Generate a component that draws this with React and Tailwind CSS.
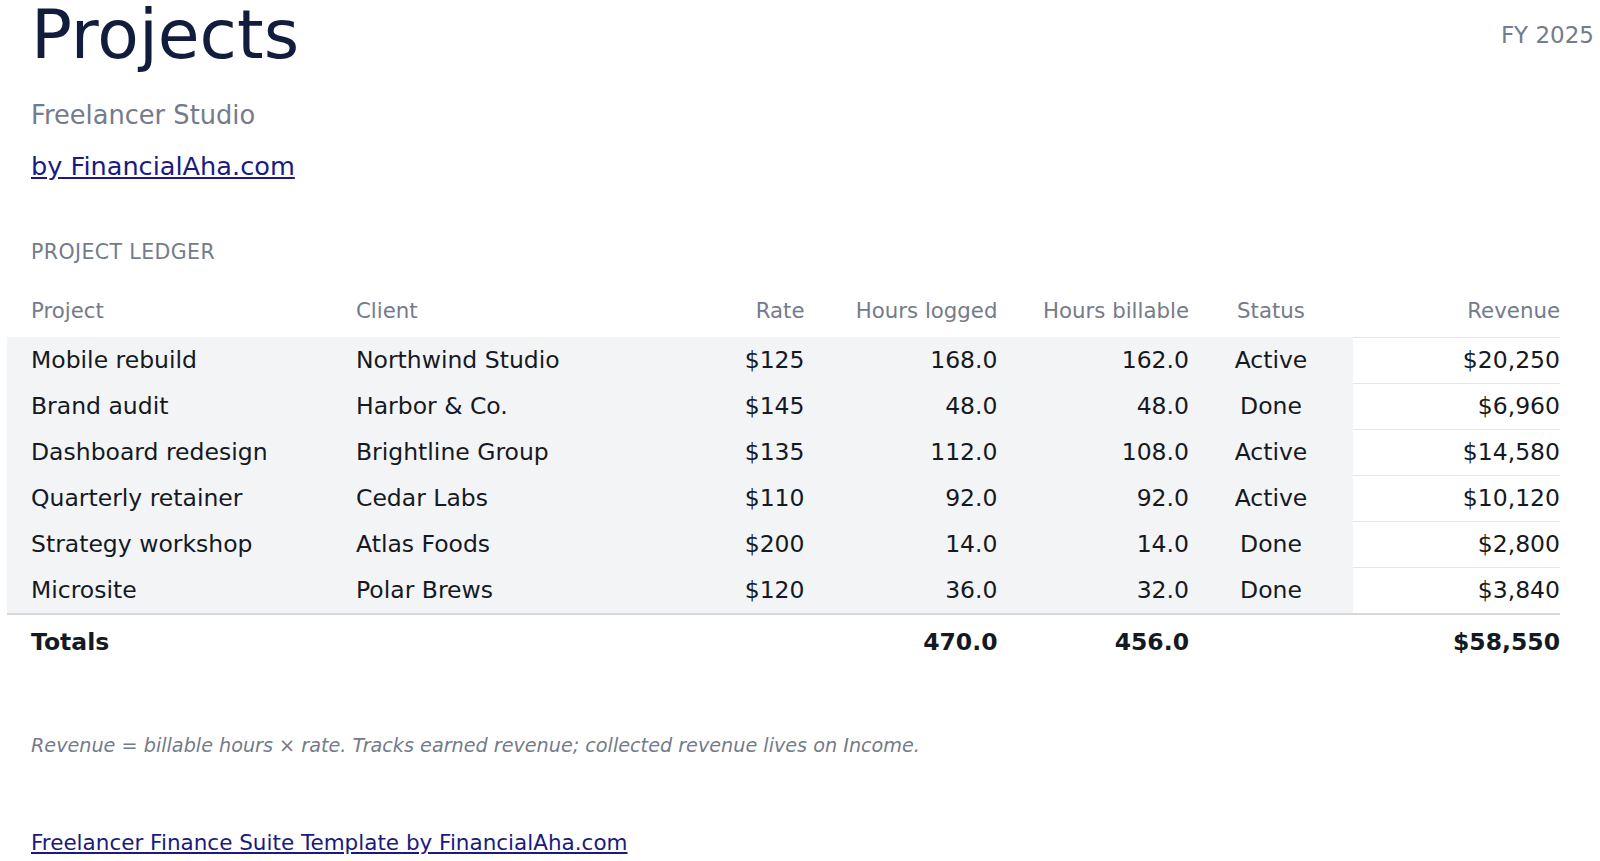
import React from 'react'

const projects = [
  { name: 'Mobile rebuild', client: 'Northwind Studio', rate: '$125', logged: '168.0', billable: '162.0', status: 'Active', revenue: '$20,250' },
  { name: 'Brand audit', client: 'Harbor & Co.', rate: '$145', logged: '48.0', billable: '48.0', status: 'Done', revenue: '$6,960' },
  { name: 'Dashboard redesign', client: 'Brightline Group', rate: '$135', logged: '112.0', billable: '108.0', status: 'Active', revenue: '$14,580' },
  { name: 'Quarterly retainer', client: 'Cedar Labs', rate: '$110', logged: '92.0', billable: '92.0', status: 'Active', revenue: '$10,120' },
  { name: 'Strategy workshop', client: 'Atlas Foods', rate: '$200', logged: '14.0', billable: '14.0', status: 'Done', revenue: '$2,800' },
  { name: 'Microsite', client: 'Polar Brews', rate: '$120', logged: '36.0', billable: '32.0', status: 'Done', revenue: '$3,840' },
]

const cols = 'grid grid-cols-[325px_309px_163.5px_193px_191.5px_164px_207px]'

const App = () => {
  return (
    <div className="min-h-screen bg-white pl-[7px] pr-[6px] pb-[6px] font-['DejaVu_Sans',sans-serif] text-[#151922]">
      {/* Page header */}
      <header className="flex items-start justify-between">
        <div className="pl-[24px]">
          <h1 className="pt-[0.5px] text-[68px] leading-[67px] font-normal text-[#121c3c]">Projects</h1>
          <p className="mt-[33px] text-[25.7px] leading-[29px] text-[#747b8a]">Freelancer Studio</p>
          <a href="#" className="mt-[22px] block text-[25.6px] leading-[29px] text-[#1a1a80] underline">
            by FinancialAha.com
          </a>
        </div>
        <div className="pt-[21.5px] text-[23px] leading-[27px] text-[#747b8a]">FY 2025</div>
      </header>

      <h2 className="mt-[59px] pl-[24px] text-[20.5px] leading-[24px] font-normal tracking-[0.02em] text-[#747b8a]">
        PROJECT LEDGER
      </h2>

      {/* Ledger table */}
      <div className="mt-[19px] w-[1553px]">
        <div className={`${cols} h-[54px] items-center pt-[2px] text-[21.3px] leading-[25px] text-[#747b8a]`}>
          <div className="pl-[24px]">Project</div>
          <div className="pl-[24px]">Client</div>
          <div className="text-right">Rate</div>
          <div className="text-right">Hours logged</div>
          <div className="text-right">Hours billable</div>
          <div className="text-center">Status</div>
          <div className="text-right">Revenue</div>
        </div>

        <div className="border-b-2 border-[#d6d8dd]">
          {projects.map((p) => (
            <div key={p.name} className={`${cols} h-[46px] text-[23.5px] leading-[27px]`}>
              <div className="flex items-center bg-[#f3f4f6] pt-[1px] pl-[24px]">{p.name}</div>
              <div className="flex items-center bg-[#f3f4f6] pt-[1px] pl-[24px]">{p.client}</div>
              <div className="flex items-center justify-end bg-[#f3f4f6] pt-[1px]">{p.rate}</div>
              <div className="flex items-center justify-end bg-[#f3f4f6] pt-[1px]">{p.logged}</div>
              <div className="flex items-center justify-end bg-[#f3f4f6] pt-[1px]">{p.billable}</div>
              <div className="flex items-center justify-center bg-[#f3f4f6] pt-[1px]">{p.status}</div>
              <div className="flex items-center justify-end border-t border-[#e5e7eb] bg-white pt-[1px]">{p.revenue}</div>
            </div>
          ))}
        </div>

        <div className={`${cols} pt-[14.5px] pb-[14px] text-[23.5px] leading-[27px] font-bold`}>
          <div className="pl-[24px]">Totals</div>
          <div />
          <div />
          <div className="text-right">470.0</div>
          <div className="text-right">456.0</div>
          <div />
          <div className="text-right">$58,550</div>
        </div>
      </div>

      <p className="mt-[65px] pl-[24px] text-[19.2px] leading-[22px] italic text-[#747b8a]">
        Revenue = billable hours × rate. Tracks earned revenue; collected revenue lives on Income.
      </p>

      <a href="#" className="mt-[73px] ml-[24px] inline-block text-[21.5px] leading-[25px] text-[#1a1a80] underline">
        Freelancer Finance Suite Template by FinancialAha.com
      </a>
    </div>
  )
}

export default App
